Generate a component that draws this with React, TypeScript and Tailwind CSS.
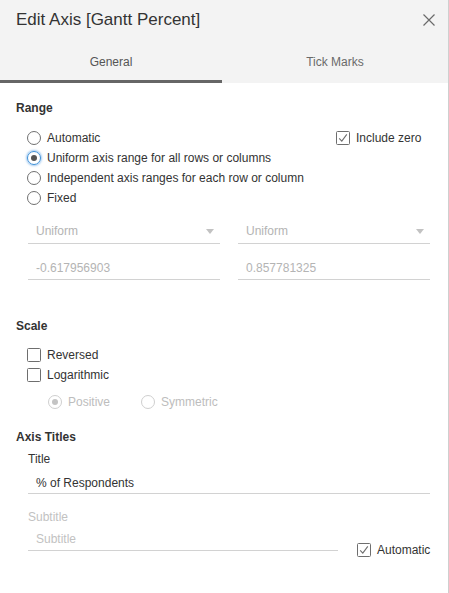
import React from 'react';

function Radio({ label, checked, disabled, focused }: { label: string; checked?: boolean; disabled?: boolean; focused?: boolean }) {
  return (
    <div className="flex items-center h-5">
      <span
        className={`w-[14px] h-[14px] rounded-full border flex items-center justify-center shrink-0 ${
          disabled ? 'border-[#cfcfcf]' : focused ? 'border-[#3d8fd6] shadow-[0_0_2px_1px_rgba(90,160,230,0.55)]' : 'border-[#707070]'
        }`}
      >
        {checked && <span className={`w-[6px] h-[6px] rounded-full ${disabled ? 'bg-[#c4c4c4]' : 'bg-[#555]'}`} />}
      </span>
      <span className={`ml-[6px] text-[12px] leading-[14px] ${disabled ? 'text-[#bdbdbd]' : 'text-[#333]'}`}>{label}</span>
    </div>
  );
}

function Checkbox({ label, checked }: { label: string; checked?: boolean }) {
  return (
    <div className="flex items-center h-5">
      <svg width="14" height="14" viewBox="0 0 14 14" className="shrink-0">
        <rect x="0.5" y="0.5" width="13" height="13" rx="1" fill="#fff" stroke="#6e6e6e" />
        {checked && <polyline points="3.2,7.4 5.8,10.2 10.8,3.4" fill="none" stroke="#6e6e6e" strokeWidth="1.1" />}
      </svg>
      <span className="ml-[6px] text-[12px] leading-[14px] text-[#333]">{label}</span>
    </div>
  );
}

function Dropdown({ value }: { value: string }) {
  return (
    <div className="w-[192px] flex items-center justify-between pl-2 pr-[6px] pb-[5px] border-b border-[#d2d2d2]">
      <span className="text-[12px] leading-[14px] text-[#b4b4b4]">{value}</span>
      <svg width="8" height="5" viewBox="0 0 8 5">
        <polygon points="0,0 8,0 4,5" fill="#c2c2c2" />
      </svg>
    </div>
  );
}

export default function App() {
  return (
    <div className="w-[449px] h-[593px] bg-white border-r border-[#cfcfcf] text-[#333]" style={{ fontFamily: '"Liberation Sans", Arial, sans-serif' }}>
      {/* Header */}
      <div className="bg-[#f3f3f3] h-[83px] flex flex-col">
        <div className="h-[40px] flex items-center justify-between pl-4 pr-[13px]">
          <span className="text-[17px] text-[#333]">Edit Axis [Gantt Percent]</span>
          <svg width="12" height="12" viewBox="0 0 12 12">
            <path d="M0.5 0.5 L11.5 11.5 M11.5 0.5 L0.5 11.5" stroke="#6a6a6a" strokeWidth="1.2" />
          </svg>
        </div>
        <div className="flex h-[43px]">
          <div className="w-[222px] flex justify-center pt-[15px] border-b-[3px] border-[#666]">
            <span className="text-[12px] leading-[14px] text-[#555]">General</span>
          </div>
          <div className="flex-1 flex justify-center pt-[15px]">
            <span className="text-[12px] leading-[14px] text-[#6a6a6a]">Tick Marks</span>
          </div>
        </div>
      </div>

      <div className="px-4">
        {/* Range */}
        <div className="mt-[18px] text-[12px] leading-[14px] font-bold text-[#333]">Range</div>
        <div className="mt-[13px] pl-[11px]">
          <div className="flex">
            <div className="w-[309px]">
              <Radio label="Automatic" />
            </div>
            <Checkbox label="Include zero" checked />
          </div>
          <Radio label="Uniform axis range for all rows or columns" checked focused />
          <Radio label="Independent axis ranges for each row or column" />
          <Radio label="Fixed" />
        </div>

        <div className="pl-3 mt-[16px] flex gap-[18px]">
          <Dropdown value="Uniform" />
          <Dropdown value="Uniform" />
        </div>
        <div className="pl-3 mt-[17px] flex gap-[18px]">
          <div className="w-[192px] pl-2 pb-[4px] border-b border-[#d2d2d2] text-[12px] leading-[14px] text-[#b4b4b4]">-0.617956903</div>
          <div className="w-[192px] pl-2 pb-[4px] border-b border-[#d2d2d2] text-[12px] leading-[14px] text-[#b4b4b4]">0.857781325</div>
        </div>

        {/* Scale */}
        <div className="mt-[39px] text-[12px] leading-[14px] font-bold text-[#333]">Scale</div>
        <div className="mt-[12px] pl-[11px]">
          <Checkbox label="Reversed" />
          <Checkbox label="Logarithmic" />
        </div>
        <div className="mt-[7px] pl-[32px] flex gap-[31px]">
          <Radio label="Positive" checked disabled />
          <Radio label="Symmetric" disabled />
        </div>

        {/* Axis Titles */}
        <div className="mt-[18px] text-[12px] leading-[14px] font-bold text-[#333]">Axis Titles</div>
        <div className="pl-3">
          <div className="mt-[8px] text-[12px] leading-[14px] text-[#333]">Title</div>
          <div className="mt-[10px] w-[402px] pl-2 pb-[3px] border-b border-[#d2d2d2] text-[12px] leading-[14px] text-[#333]">% of Respondents</div>
          <div className="mt-[16px] text-[12px] leading-[14px] text-[#c2c2c2]">Subtitle</div>
          <div className="mt-[8px] flex items-start">
            <div className="w-[310px] pl-2 pb-[4px] border-b border-[#d2d2d2] text-[12px] leading-[14px] text-[#c2c2c2]">Subtitle</div>
            <div className="ml-[19px] mt-[8px]">
              <Checkbox label="Automatic" checked />
            </div>
          </div>
        </div>
      </div>
    </div>
  );
}
